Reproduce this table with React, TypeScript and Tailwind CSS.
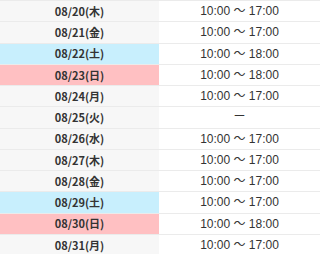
import React from "react";

type Row = { date: string; time: string; kind?: "sat" | "sun" };

const rows: Row[] = [
  { date: "08/20(木)", time: "10:00 〜 17:00" },
  { date: "08/21(金)", time: "10:00 〜 17:00" },
  { date: "08/22(土)", time: "10:00 〜 18:00", kind: "sat" },
  { date: "08/23(日)", time: "10:00 〜 18:00", kind: "sun" },
  { date: "08/24(月)", time: "10:00 〜 17:00" },
  { date: "08/25(火)", time: "ー" },
  { date: "08/26(水)", time: "10:00 〜 17:00" },
  { date: "08/27(木)", time: "10:00 〜 17:00" },
  { date: "08/28(金)", time: "10:00 〜 17:00" },
  { date: "08/29(土)", time: "10:00 〜 17:00", kind: "sat" },
  { date: "08/30(日)", time: "10:00 〜 18:00", kind: "sun" },
  { date: "08/31(月)", time: "10:00 〜 17:00" },
];

export default function App() {
  return (
    <div className="w-[320px] h-[254px] overflow-hidden bg-white">
      <div className="flex flex-col">
        {rows.map((r) => (
          <div
            key={r.date}
            className="flex h-[21.25px] border-t border-[#ebebeb]"
          >
            <div
              className={
                "w-[159px] flex items-center justify-center text-[11px] font-bold text-[#333] " +
                (r.kind === "sat"
                  ? "bg-[#c8effd]"
                  : r.kind === "sun"
                  ? "bg-[#ffc0c2]"
                  : "bg-[#f7f7f7]")
              }
              style={{ fontFamily: '"Noto Sans CJK JP", "Noto Sans", sans-serif' }}
            >
              {r.date}
            </div>
            <div
              className="flex-1 flex items-center justify-center text-[12px] text-[#333] bg-white"
              style={{ fontFamily: '"Liberation Sans", "Noto Sans CJK JP", sans-serif' }}
            >
              {r.time}
            </div>
          </div>
        ))}
      </div>
    </div>
  );
}
